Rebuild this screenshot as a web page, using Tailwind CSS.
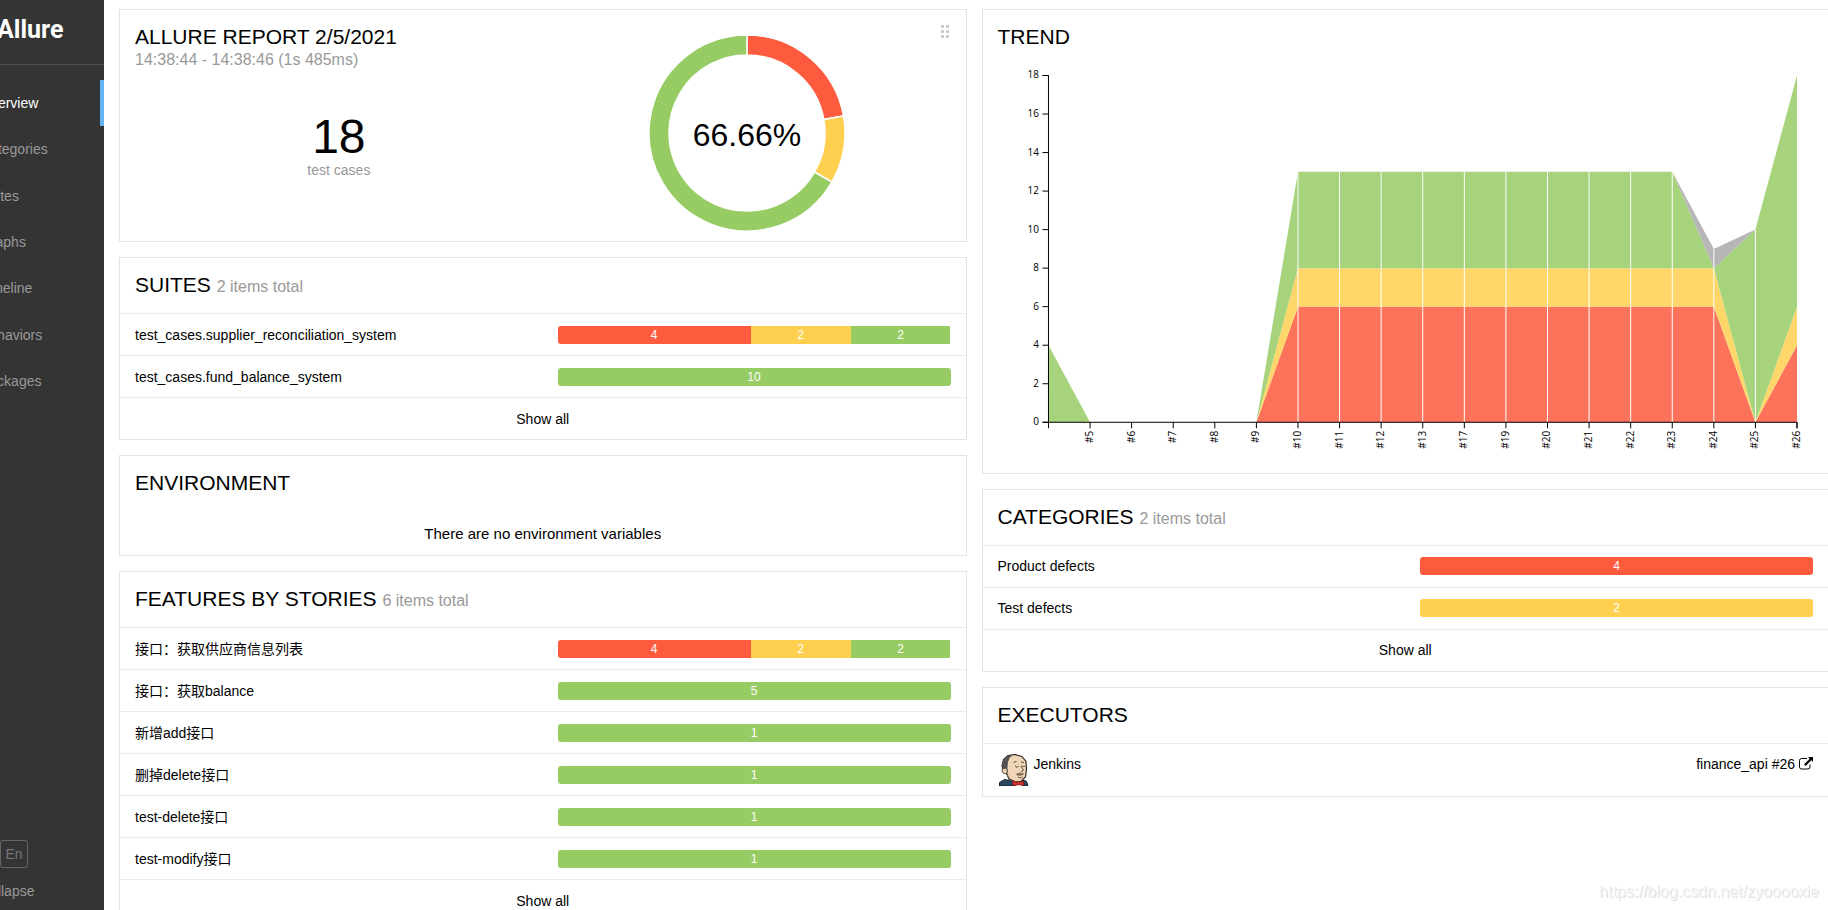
<!DOCTYPE html>
<html lang="en">
<head>
<meta charset="utf-8">
<title>Allure Report</title>
<script src="https://cdn.jsdelivr.net/npm/@tailwindcss/browser@4"></script>
</head>
<body class="flex h-screen overflow-hidden bg-white font-['Liberation_Sans','Noto_Sans_CJK_SC',sans-serif] text-sm leading-5 text-black">

<aside class="flex w-[104px] shrink-0 flex-col overflow-hidden bg-[#343434] text-[#999]">
  <div class="h-[65px] border-b border-[#505050] pt-[14px]">
    <a href="#" class="-ml-[3px] block font-[Roboto,sans-serif] text-[25px] leading-8 font-bold text-white">Allure</a>
  </div>
  <nav class="mt-[15px] grid h-[324px] auto-rows-fr">
    <a href="#overview" class="flex items-center border-r-4 border-[#64b5f6] text-white"><span class="-ml-5">Overview</span></a>
    <a href="#categories" class="flex items-center"><span class="-ml-5">Categories</span></a>
    <a href="#suites" class="flex items-center"><span class="-ml-5">Suites</span></a>
    <a href="#graph" class="flex items-center"><span class="-ml-5">Graphs</span></a>
    <a href="#timeline" class="flex items-center"><span class="-ml-5">Timeline</span></a>
    <a href="#behaviors" class="flex items-center"><span class="-ml-5">Behaviors</span></a>
    <a href="#packages" class="flex items-center"><span class="-ml-5">Packages</span></a>
  </nav>
  <div class="mt-auto flex flex-col items-start gap-[13px] pb-[9px]">
    <button class="size-7 rounded-[3px] border border-[#666] text-center text-[#777]">En</button>
    <button class="-ml-5">Collapse</button>
  </div>
</aside>

<main class="-mr-px grid min-w-0 flex-1 grid-cols-2 items-start gap-[15px] pt-[9px] pl-[15px]">

  <div class="flex min-w-0 flex-col gap-[15px]">

    <section class="relative grid h-[233px] grid-cols-2 border border-[#e4e4e4] px-[15px]">
      <div class="pt-[15px]">
        <h2 class="text-[21px] leading-6">ALLURE REPORT 2/5/2021</h2>
        <div class="text-base leading-[22px] text-[#999]">14:38:44 - 14:38:46 (1s 485ms)</div>
        <div class="pt-[43px] text-center">
          <div class="text-[48px] leading-[46px]">18</div>
          <div class="text-[#999]">test cases</div>
        </div>
      </div>
      <div class="flex justify-center pt-[23px]">
        <svg class="size-[200px]" viewBox="-100 -100 200 200" role="img" aria-label="66.66% passed">
          <g id="donut" stroke="#fff" stroke-width="1.5"></g>
          <text y="13" text-anchor="middle" class="text-[32px]">66.66%</text>
        </svg>
      </div>
      <button class="absolute top-[15px] right-[17px] grid grid-cols-[3px_3px] gap-0.5" aria-label="Move widget">
        <i class="size-[3px] bg-[#ccc]"></i><i class="size-[3px] bg-[#ccc]"></i>
        <i class="size-[3px] bg-[#ccc]"></i><i class="size-[3px] bg-[#ccc]"></i>
        <i class="size-[3px] bg-[#ccc]"></i><i class="size-[3px] bg-[#ccc]"></i>
      </button>
    </section>

    <section class="border border-[#e4e4e4]">
      <h2 class="px-[15px] pt-[15px] pb-4 text-[21px] leading-6">SUITES <span class="text-base leading-none text-[#999]">2 items total</span></h2>
      <a href="#suites/1" class="flex h-[42px] items-center border-t border-[#ececec] px-[15px]">
        <span class="flex-1">test_cases.supplier_reconciliation_system</span>
        <span class="flex h-[18px] w-[393px] overflow-hidden rounded-[3px] text-center text-xs leading-[18px] text-white">
          <span class="bg-[#fd5a3e]" style="width:49.2%">4</span><span class="bg-[#ffd050]" style="width:25.4%">2</span><span class="bg-[#97cc64]" style="width:25.4%">2</span>
        </span>
      </a>
      <a href="#suites/2" class="flex h-[42px] items-center border-t border-[#ececec] px-[15px]">
        <span class="flex-1">test_cases.fund_balance_system</span>
        <span class="h-[18px] w-[393px] rounded-[3px] bg-[#97cc64] text-center text-xs leading-[18px] text-white">10</span>
      </a>
      <a href="#suites" class="flex h-[42px] items-center justify-center border-t border-[#ececec]">Show all</a>
    </section>

    <section class="h-[101px] border border-[#e4e4e4]">
      <h2 class="px-[15px] pt-[15px] pb-4 text-[21px] leading-6">ENVIRONMENT</h2>
      <p class="pt-[11px] text-center text-[15px] leading-6">There are no environment variables</p>
    </section>

    <section class="border border-[#e4e4e4]">
      <h2 class="px-[15px] pt-[15px] pb-4 text-[21px] leading-6">FEATURES BY STORIES <span class="text-base leading-none text-[#999]">6 items total</span></h2>
      <a href="#behaviors/1" class="flex h-[42px] items-center border-t border-[#ececec] px-[15px]">
        <span class="flex-1">接口：获取供应商信息列表</span>
        <span class="flex h-[18px] w-[393px] overflow-hidden rounded-[3px] text-center text-xs leading-[18px] text-white">
          <span class="bg-[#fd5a3e]" style="width:49.2%">4</span><span class="bg-[#ffd050]" style="width:25.4%">2</span><span class="bg-[#97cc64]" style="width:25.4%">2</span>
        </span>
      </a>
      <a href="#behaviors/2" class="flex h-[42px] items-center border-t border-[#ececec] px-[15px]">
        <span class="flex-1">接口：获取balance</span>
        <span class="h-[18px] w-[393px] rounded-[3px] bg-[#97cc64] text-center text-xs leading-[18px] text-white">5</span>
      </a>
      <a href="#behaviors/3" class="flex h-[42px] items-center border-t border-[#ececec] px-[15px]">
        <span class="flex-1">新增add接口</span>
        <span class="h-[18px] w-[393px] rounded-[3px] bg-[#97cc64] text-center text-xs leading-[18px] text-white">1</span>
      </a>
      <a href="#behaviors/4" class="flex h-[42px] items-center border-t border-[#ececec] px-[15px]">
        <span class="flex-1">删掉delete接口</span>
        <span class="h-[18px] w-[393px] rounded-[3px] bg-[#97cc64] text-center text-xs leading-[18px] text-white">1</span>
      </a>
      <a href="#behaviors/5" class="flex h-[42px] items-center border-t border-[#ececec] px-[15px]">
        <span class="flex-1">test-delete接口</span>
        <span class="h-[18px] w-[393px] rounded-[3px] bg-[#97cc64] text-center text-xs leading-[18px] text-white">1</span>
      </a>
      <a href="#behaviors/6" class="flex h-[42px] items-center border-t border-[#ececec] px-[15px]">
        <span class="flex-1">test-modify接口</span>
        <span class="h-[18px] w-[393px] rounded-[3px] bg-[#97cc64] text-center text-xs leading-[18px] text-white">1</span>
      </a>
      <a href="#behaviors" class="flex h-[42px] items-center justify-center border-t border-[#ececec]">Show all</a>
    </section>
  </div>

  <div class="flex min-w-0 flex-col gap-[15px]">

    <section class="border border-[#e4e4e4]">
      <h2 class="px-[15px] pt-[15px] pb-4 text-[21px] leading-6">TREND</h2>
      <svg class="block h-auto w-full font-['Open_Sans',sans-serif] text-[10px]" viewBox="0 0 846 408" role="img" aria-label="Trend of test results by build">
        <g id="areas" opacity="0.85"></g>
        <g id="guides" stroke="#fff"></g>
        <g id="axes" stroke="#000" fill="none"></g>
        <g id="labels"></g>
      </svg>
    </section>

    <section class="border border-[#e4e4e4]">
      <h2 class="px-[15px] pt-[15px] pb-4 text-[21px] leading-6">CATEGORIES <span class="text-base leading-none text-[#999]">2 items total</span></h2>
      <a href="#categories/1" class="flex h-[42px] items-center border-t border-[#ececec] px-[15px]">
        <span class="flex-1">Product defects</span>
        <span class="h-[18px] w-[393px] rounded-[3px] bg-[#fd5a3e] text-center text-xs leading-[18px] text-white">4</span>
      </a>
      <a href="#categories/2" class="flex h-[42px] items-center border-t border-[#ececec] px-[15px]">
        <span class="flex-1">Test defects</span>
        <span class="h-[18px] w-[393px] rounded-[3px] bg-[#ffd050] text-center text-xs leading-[18px] text-white">2</span>
      </a>
      <a href="#categories" class="flex h-[42px] items-center justify-center border-t border-[#ececec]">Show all</a>
    </section>

    <section class="border border-[#e4e4e4]">
      <h2 class="px-[15px] pt-[15px] pb-4 text-[21px] leading-6">EXECUTORS</h2>
      <div class="flex h-[53px] items-start border-t border-[#ececec] px-[15px] pt-[10px]">
        <svg class="mr-1 size-8" viewBox="0 0 32 32" aria-hidden="true">
          <path d="M1.5 32v-3.500l5-3 5 1 9-1 7.500 1.500 2 4-1 1z" fill="#26495f" stroke="#17222b"/>
          <path d="M5.500 17 4 12 5.500 5.500 10 1.500 17 .5l7 2 4 5 .5 8-1 7.500-4.500 4.500-6 .5-6-3-2.500-6z" fill="#f0d6b7" stroke="#2f2b29" stroke-width="1.200"/>
          <path d="M9 18 7.500 15 4.500 14 4 11l1.500-5.500L10 2l5-1-3.500 3L10 8l-.5 5z" fill="#555353"/>
          <path d="M5 14.500c-1.500 1-1.300 4.500 1.500 5l2 .5 1-4-2-2z" fill="#f0d6b7" stroke="#2f2b29" stroke-width=".9"/>
          <path d="M9 20c1 4 3 6 7 7" fill="none" stroke="#765c48"/>
          <path d="M15.500 8.500l3-1.200M23 8l3 .5M17.500 11.500c0 2 2 2 3.200.8M24 11.500c.5 1.500 2 1.200 3 .5M23 12l2.500 4.500-2.500 1" fill="none" stroke="#4c4038" stroke-width=".9"/>
          <path d="M18.500 20.500c2-2 4-1.500 7-.5-2 1.500-5 1.700-7 .5zM20 23c2 1.200 3.500 1 5 0" fill="#a9866c" stroke="#59483c" stroke-width=".8"/>
          <path d="M18 28l4 1 2 3h-6z" fill="#e8e8e8"/>
          <path d="M14.500 26.500l5.500 2 5.500-1.500.5 4.500-5.500-1L15 32z" fill="#d33833" stroke="#711" stroke-width=".7"/>
          <circle cx="20.500" cy="29.200" r="1.500" fill="#ef3d3a" stroke="#711" stroke-width=".6"/>
        </svg>
        <span class="flex-1">Jenkins</span>
        <a href="#build-26" class="flex items-start gap-1">finance_api #26
          <svg class="mt-[3px] h-[13px] w-[14px]" viewBox="0 0 14 13" aria-hidden="true">
            <path d="M8 1.500H2.500a2 2 0 0 0-2 2V10a2 2 0 0 0 2 2H9a2 2 0 0 0 2-2V7.500" fill="none" stroke="#000"/>
            <path d="M9 0h5v5l-1.700-1.700-5.600 5.600-1.600-1.600 5.600-5.600z"/>
          </svg>
        </a>
      </div>
    </section>
  </div>
</main>

<div class="pointer-events-none fixed right-[9px] bottom-[6px] text-base leading-6 text-[#f4f4f4] [text-shadow:1px_1px_0_#e0e0e0]">https://blog.csdn.net/zyooooxie</div>

<script>
const NS = 'http://www.w3.org/2000/svg';
function add(parent, name, attrs, text) {
  const el = document.createElementNS(NS, name);
  for (const key in attrs) el.setAttribute(key, attrs[key]);
  if (text !== undefined) el.textContent = text;
  document.getElementById(parent).append(el);
}

// Status ring: failed, broken, passed
let from = 0;
for (const [count, color] of [[4, '#fd5a3e'], [2, '#ffd050'], [12, '#97cc64']]) {
  const to = from + count / 18 * 2 * Math.PI, big = to - from > Math.PI ? 1 : 0;
  const pt = (r, a) => (r * Math.sin(a)).toFixed(2) + ' ' + (-r * Math.cos(a)).toFixed(2);
  add('donut', 'path', {fill: color, d: `M${pt(98, from)}A98 98 0 ${big} 1 ${pt(98, to)}L${pt(78, to)}A78 78 0 ${big} 0 ${pt(78, from)}Z`});
  from = to;
}

// Stacked trend, bottom to top: failed, broken, passed, skipped
const builds = ['', '#5', '#6', '#7', '#8', '#9', '#10', '#11', '#12', '#13', '#17', '#19', '#20', '#21', '#22', '#23', '#24', '#25', '#26'];
const none = [0, 0, 0, 0], steady = [6, 2, 5, 0];
const data = [[0, 0, 4, 0], ...Array(5).fill(none), ...Array(10).fill(steady), [6, 2, 0, 1], [0, 0, 10, 0], [4, 2, 12, 0]];
const colors = ['#fd5a3e', '#ffd050', '#97cc64', '#aaa'];
const x = i => 65.5 + i * 749 / 18;
const y = v => 357.5 - v * 347 / 18;
const sum = (row, n) => row.slice(0, n).reduce((a, b) => a + b, 0);
colors.forEach((color, k) => {
  const top = data.map((row, i) => `${x(i)},${y(sum(row, k + 1))}`);
  const base = data.map((row, i) => `${x(i)},${y(sum(row, k))}`).reverse();
  add('areas', 'polygon', {fill: color, points: top.concat(base).join(' ')});
});
data.forEach((row, i) => {
  if (i > 0 && i < 18) add('guides', 'line', {x1: x(i), x2: x(i), y1: y(0), y2: y(sum(row, 4))});
});
add('axes', 'path', {d: 'M59.5 10.5H65.5V357.5H59.5M65.5 363.500V357.5H814.5V363.500'});
for (let v = 0; v <= 18; v += 2) {
  add('axes', 'line', {x1: 59.5, x2: 65.5, y1: y(v), y2: y(v)});
  add('labels', 'text', {x: 56, y: y(v) + 3, 'text-anchor': 'end'}, v);
}
builds.forEach((name, i) => {
  if (!name) return;
  add('axes', 'line', {x1: x(i), x2: x(i), y1: 357.5, y2: 363.5});
  add('labels', 'text', {transform: `translate(${x(i) + 3} 366) rotate(-90)`, 'text-anchor': 'end'}, name);
});
</script>
</body>
</html>
